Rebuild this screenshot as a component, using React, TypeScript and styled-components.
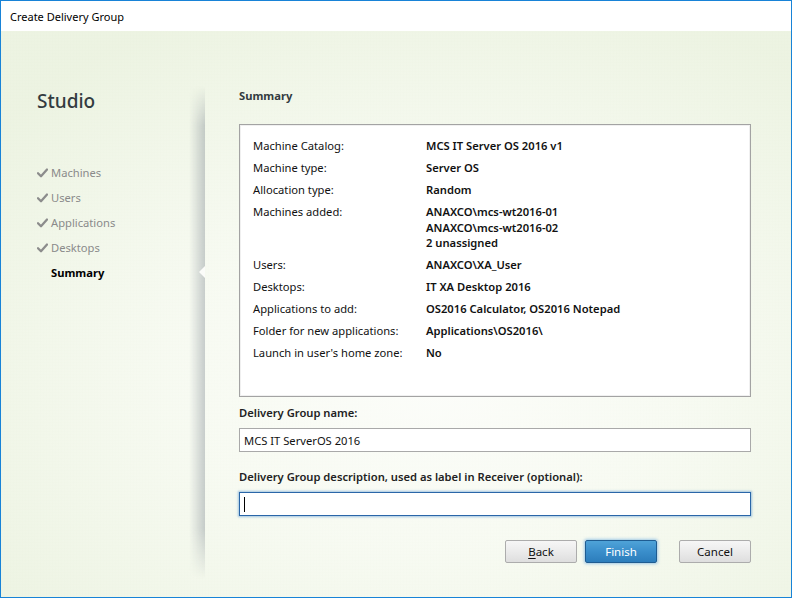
import { Fragment } from "react";
import styled, { createGlobalStyle } from "styled-components";

const GlobalStyle = createGlobalStyle`
    html, body {
        margin: 0;
        padding: 0;
        background: #ffffff;
    }
    * {
        box-sizing: border-box;
    }
`;

const font = `"Segoe UI", "Noto Sans", sans-serif`;

const Window = styled.div`
    width: 792px;
    height: 598px;
    border: 1px solid #1883d7;
    display: flex;
    flex-direction: column;
    font-family: ${font};
    font-size: 11.2px;
    color: #000;
    overflow: hidden;
`;

const TitleBar = styled.div`
    height: 30px;
    flex: none;
    background: #fff;
    display: flex;
    align-items: center;
    padding-left: 9px;
    font-size: 11px;
    color: #000;
`;

const Body = styled.div`
    flex: 1;
    display: flex;
    background:
        radial-gradient(ellipse 70% 70% at 55% 60%, rgba(252, 253, 250, 1) 0%, rgba(248, 251, 243, 0.9) 45%, rgba(236, 243, 225, 0.9) 100%),
        repeating-linear-gradient(0deg, rgba(210, 222, 195, 0.25) 0 1px, transparent 1px 3px),
        repeating-linear-gradient(90deg, rgba(210, 222, 195, 0.25) 0 1px, transparent 1px 3px),
        #f3f7ec;
`;

const Sidebar = styled.div`
    width: 204px;
    flex: none;
    position: relative;
    padding: 58px 0 0 36px;

    &::after {
        content: "";
        position: absolute;
        right: 0;
        top: 55px;
        bottom: 18px;
        width: 16px;
        background: linear-gradient(to right, rgba(120, 130, 140, 0), rgba(120, 130, 140, 0.38));
        -webkit-mask-image: linear-gradient(to bottom, transparent 0, #000 40px, #000 calc(100% - 50px), transparent 100%);
        mask-image: linear-gradient(to bottom, transparent 0, #000 40px, #000 calc(100% - 50px), transparent 100%);
    }
`;

const Notch = styled.div`
    position: absolute;
    right: 0;
    top: 235px;
    width: 0;
    height: 0;
    border-top: 6px solid transparent;
    border-bottom: 6px solid transparent;
    border-right: 6px solid #fbfcf9;
    z-index: 1;
`;

const Brand = styled.div`
    font-size: 19px;
    line-height: 24px;
    font-weight: 500;
    color: #333b40;
`;

const NavList = styled.div`
    margin-top: 47px;
    display: flex;
    flex-direction: column;
`;

const NavItem = styled.div<{ $active?: boolean }>`
    height: 25px;
    display: flex;
    align-items: center;
    color: ${(p) => (p.$active ? "#000" : "#8a8a8a")};
    font-weight: ${(p) => (p.$active ? 700 : 400)};
    padding-left: ${(p) => (p.$active ? "14px" : "0")};
`;

const Check = styled.svg`
    width: 11px;
    height: 10px;
    margin-right: 3px;
    flex: none;
`;

const Main = styled.div`
    flex: 1;
    padding: 57px 40px 0 34px;
    display: flex;
    flex-direction: column;
`;

const Heading = styled.div`
    font-weight: 700;
    line-height: 16px;
    color: #333b40;
`;

const SummaryBox = styled.div`
    margin-top: 20px;
    height: 273px;
    background: #fff;
    border: 1px solid #a3a3a3;
    box-shadow: inset 0 0 0 1px #f0f0f0;
    padding: 13px 12px 0 13px;
    display: grid;
    grid-template-columns: 173px 1fr;
    row-gap: 6.5px;
    align-content: start;
    line-height: 15.5px;
`;

const Label = styled.div`
    color: #111;
`;

const Value = styled.div`
    font-weight: 600;
    color: #111;
`;

const FieldLabel = styled.div<{ $gap: number }>`
    margin-top: ${(p) => p.$gap}px;
    line-height: 16px;
    font-weight: 600;
    color: #222;
`;

const TextBox = styled.div<{ $focused?: boolean }>`
    margin-top: 7px;
    height: 24px;
    background: #fff;
    border: 1px solid ${(p) => (p.$focused ? "#2a66a8" : "#a9a9a9")};
    box-shadow: ${(p) => (p.$focused ? "0 0 2px 1px rgba(90, 150, 210, 0.55)" : "none")};
    display: flex;
    align-items: center;
    padding-left: 4px;
    color: #111;
`;

const Caret = styled.span`
    width: 1px;
    height: 15px;
    background: #000;
`;

const ButtonRow = styled.div`
    margin-top: 24px;
    display: flex;
    justify-content: flex-end;
`;

const Button = styled.button<{ $primary?: boolean; $gap?: number }>`
    width: 72px;
    height: 23px;
    margin-left: ${(p) => p.$gap ?? 0}px;
    font-family: ${font};
    font-size: 11.5px;
    border-radius: 2px;
    padding: 0;
    cursor: default;
    color: ${(p) => (p.$primary ? "#fff" : "#111")};
    border: 1px solid ${(p) => (p.$primary ? "#1f5c91" : "#acacac")};
    background: ${(p) =>
        p.$primary
            ? "linear-gradient(to bottom, #4fa3d8 0%, #3a8ecb 50%, #2c7dbb 100%)"
            : "linear-gradient(to bottom, #f6f6f6 0%, #ebebeb 50%, #dedede 100%)"};
    box-shadow: ${(p) => (p.$primary ? "0 0 3px 1px rgba(90, 160, 220, 0.55)" : "none")};

    u {
        text-decoration-thickness: 1px;
        text-underline-offset: 2px;
    }
`;

const rows: [string, string[]][] = [
    ["Machine Catalog:", ["MCS IT Server OS 2016 v1"]],
    ["Machine type:", ["Server OS"]],
    ["Allocation type:", ["Random"]],
    ["Machines added:", ["ANAXCO\\mcs-wt2016-01", "ANAXCO\\mcs-wt2016-02", "2 unassigned"]],
    ["Users:", ["ANAXCO\\XA_User"]],
    ["Desktops:", ["IT XA Desktop 2016"]],
    ["Applications to add:", ["OS2016 Calculator, OS2016 Notepad"]],
    ["Folder for new applications:", ["Applications\\OS2016\\"]],
    ["Launch in user's home zone:", ["No"]],
];

const steps = ["Machines", "Users", "Applications", "Desktops"];

const CheckIcon = () => (
    <Check viewBox="0 0 11 10">
        <path d="M1 5.2 L4 8.2 L10 1.5" fill="none" stroke="#8c8c8c" strokeWidth="2.3" strokeLinecap="round" strokeLinejoin="round" />
    </Check>
);

const App = () => {
    return (
        <>
            <GlobalStyle />
            <Window>
                <TitleBar>Create Delivery Group</TitleBar>
                <Body>
                    <Sidebar>
                        <Brand>Studio</Brand>
                        <NavList>
                            {steps.map((s) => (
                                <NavItem key={s}>
                                    <CheckIcon />
                                    {s}
                                </NavItem>
                            ))}
                            <NavItem $active>Summary</NavItem>
                        </NavList>
                        <Notch />
                    </Sidebar>
                    <Main>
                        <Heading>Summary</Heading>
                        <SummaryBox>
                            {rows.map(([label, values]) => (
                                <Fragment key={label}>
                                    <Label>{label}</Label>
                                    <Value>
                                        {values.map((v) => (
                                            <div key={v}>{v}</div>
                                        ))}
                                    </Value>
                                </Fragment>
                            ))}
                        </SummaryBox>
                        <FieldLabel $gap={8}>Delivery Group name:</FieldLabel>
                        <TextBox>MCS IT ServerOS 2016</TextBox>
                        <FieldLabel $gap={17}>Delivery Group description, used as label in Receiver (optional):</FieldLabel>
                        <TextBox $focused>
                            <Caret />
                        </TextBox>
                        <ButtonRow>
                            <Button>
                                <u>B</u>ack
                            </Button>
                            <Button $primary $gap={8}>Finish</Button>
                            <Button $gap={22}>Cancel</Button>
                        </ButtonRow>
                    </Main>
                </Body>
            </Window>
        </>
    );
};

export default App;
